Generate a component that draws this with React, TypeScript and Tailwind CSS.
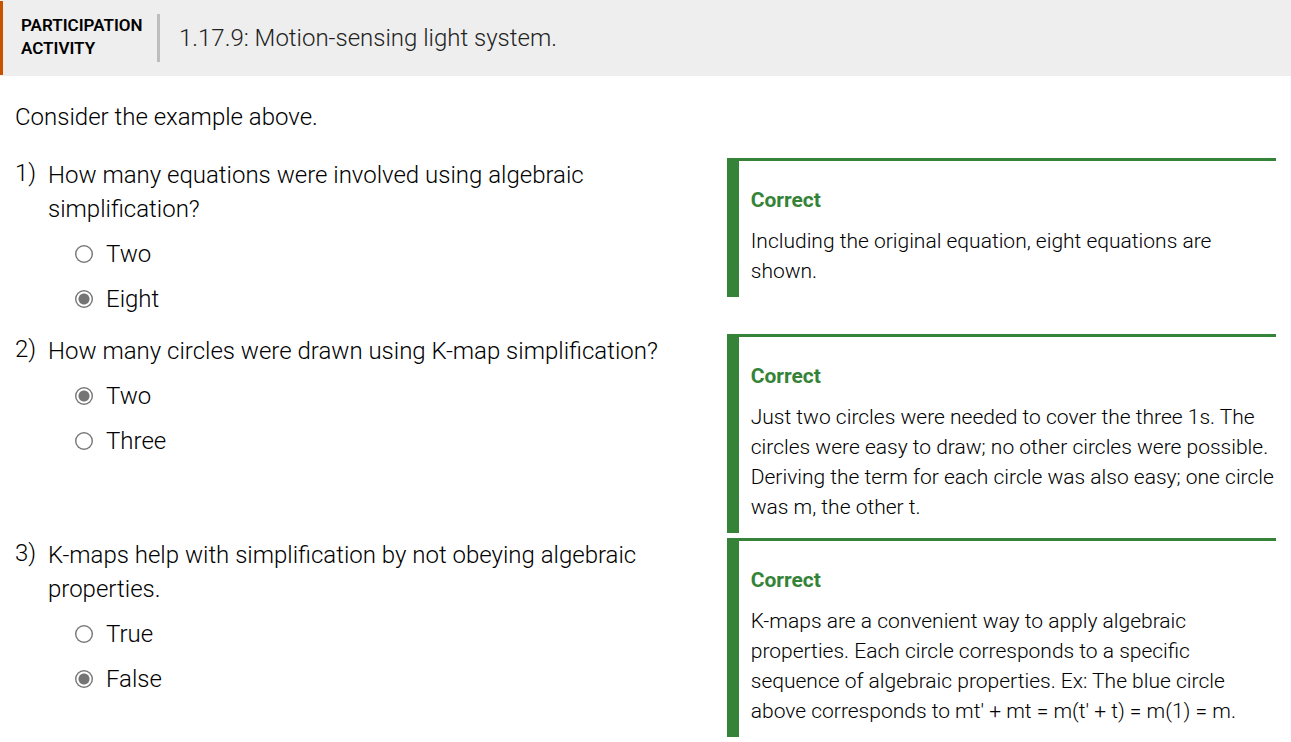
import React, { useState } from 'react';

type Question = {
  prompt: string;
  options: string[];
  answer: string;
  explanation: string;
};

const questions: Question[] = [
  {
    prompt: 'How many equations were involved using algebraic simplification?',
    options: ['Two', 'Eight'],
    answer: 'Eight',
    explanation: 'Including the original equation, eight equations are shown.',
  },
  {
    prompt: 'How many circles were drawn using K-map simplification?',
    options: ['Two', 'Three'],
    answer: 'Two',
    explanation:
      'Just two circles were needed to cover the three 1s. The circles were easy to draw; no other circles were possible. Deriving the term for each circle was also easy; one circle was m, the other t.',
  },
  {
    prompt: 'K-maps help with simplification by not obeying algebraic properties.',
    options: ['True', 'False'],
    answer: 'False',
    explanation:
      "K-maps are a convenient way to apply algebraic properties. Each circle corresponds to a specific sequence of algebraic properties. Ex: The blue circle above corresponds to mt' + mt = m(t' + t) = m(1) = m.",
  },
];

function QuestionRow({ question, index }: { question: Question; index: number }) {
  const [choice, setChoice] = useState(question.answer);
  const correct = choice === question.answer;
  return (
    <section className="grid grid-cols-[minmax(0,57fr)_minmax(0,45fr)] gap-x-4 pb-[5px]">
      <fieldset className="flex min-w-0 items-start">
        <span className="w-[33px] shrink-0 text-2xl leading-[30px]">{index + 1})</span>
        <div className="min-w-0 flex-1">
          <p id={`prompt-${index}`} className="pr-6 text-2xl leading-[34px]">
            {question.prompt}
          </p>
          <div role="radiogroup" aria-labelledby={`prompt-${index}`} className="pt-1 pb-[9px] pl-[27px]">
            {question.options.map((option) => (
              <label key={option} className="flex h-[45px] items-center gap-[13px] pt-[3px] text-2xl">
                <input
                  type="radio"
                  name={`question-${index}`}
                  checked={choice === option}
                  onChange={() => setChoice(option)}
                  className="size-[18px] shrink-0 appearance-none rounded-full bg-[radial-gradient(circle,#fff_7px,#757575_8px)] checked:bg-[radial-gradient(circle,#757575_5px,#fff_6px,#fff_7px,#757575_8px)]"
                />
                {option}
              </label>
            ))}
          </div>
        </div>
      </fieldset>
      <div className="self-start border-t-[3px] border-l-[12px] border-[#348338] pt-6 pb-[11px] pl-3">
        {correct && (
          <>
            <h2 className="text-[21px] leading-[30px] font-bold text-[#348338]">Correct</h2>
            <p className="pt-[11px] text-[21px] leading-[30px]">{question.explanation}</p>
          </>
        )}
      </div>
    </section>
  );
}

export default function App() {
  return (
    <main className="bg-white font-[Roboto,sans-serif] font-light text-black">
      <header className="bg-[#eeeeee] py-px">
        <div className="flex h-[74px] items-center border-l-[3px] border-[#c75300] pl-[18px]">
          <h2 className="w-[136px] pb-0.5 text-[17px] leading-[23px] font-semibold">
            PARTICIPATION
            <br />
            ACTIVITY
          </h2>
          <div className="h-12 border-l-[3px] border-[#bdbdbd]" />
          <h1 className="pl-[19px] text-2xl text-[#222222]">1.17.9: Motion-sensing light system.</h1>
        </div>
      </header>
      <div className="px-[15px] pt-6">
        <p className="pb-6 text-2xl leading-[34px]">Consider the example above.</p>
        <div>
          {questions.map((question, index) => (
            <QuestionRow key={question.prompt} question={question} index={index} />
          ))}
        </div>
      </div>
    </main>
  );
}
